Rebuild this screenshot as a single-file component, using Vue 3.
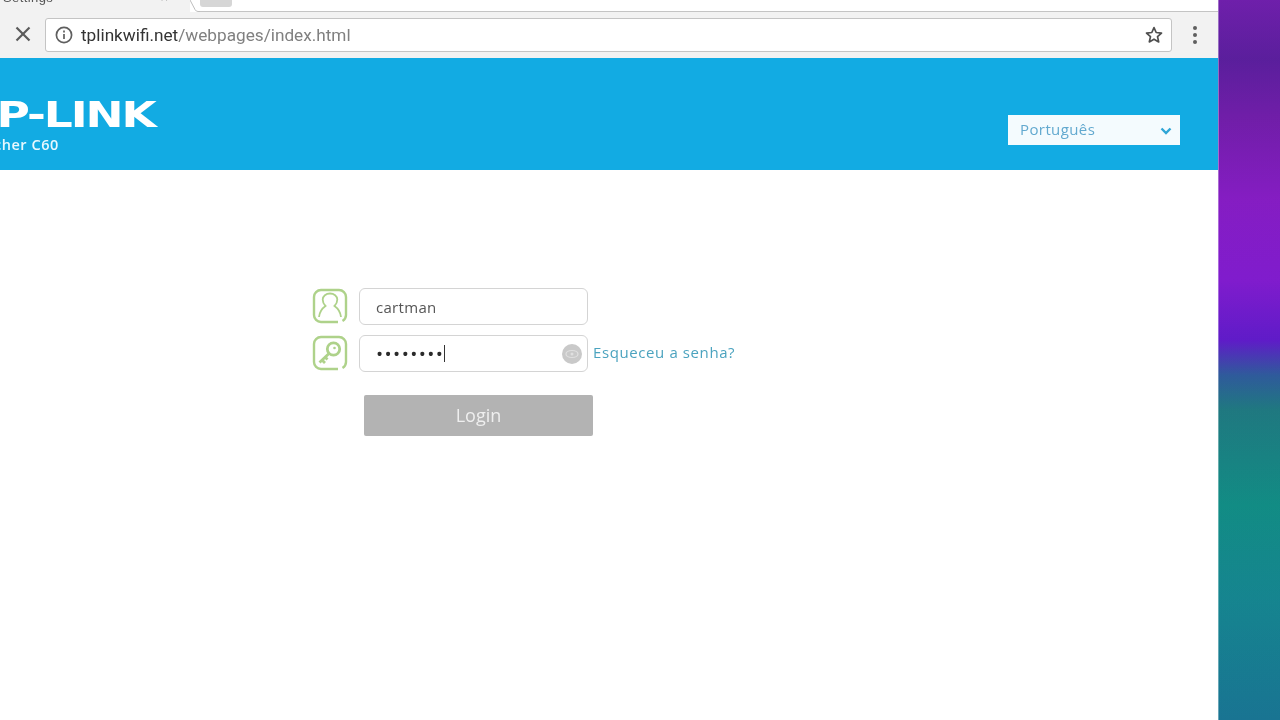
<script setup>
const username = 'cartman'
const dots = '••••••••'
</script>

<template>
  <div class="screen">
    <div class="browser">
      <div class="tabstrip">
        <div class="tab-active"><span class="tab-title">Settings</span><span class="tab-close">×</span></div>
        <svg class="tab-edge" width="10" height="12" viewBox="0 0 10 12" fill="none" stroke="#bdbdbd" stroke-width="1">
          <path d="M0 0l5 9.500q1 2 3 2h2"/>
        </svg>
        <div class="tab-rest"><div class="tab-new"></div></div>
      </div>
      <div class="toolbar">
        <svg class="tb-close" width="20" height="20" viewBox="0 0 20 20" fill="none" stroke="#5a5a5a" stroke-width="2.2">
          <line x1="3.500" y1="2.500" x2="16.500" y2="15.500"/><line x1="16.500" y1="2.500" x2="3.500" y2="15.500"/>
        </svg>
        <div class="omnibox">
          <svg width="18" height="18" viewBox="0 0 18 18" fill="none" stroke="#5f5f5f" stroke-width="1.700">
            <circle cx="9" cy="9" r="7.600"/><line x1="9" y1="8" x2="9" y2="13"/><line x1="9" y1="4.600" x2="9" y2="6.400"/>
          </svg>
          <span class="url"><span class="host">tplinkwifi.net</span>/webpages/index.html</span>
          <svg class="star" width="20" height="20" viewBox="0 0 20 20" fill="none" stroke="#4f4f4f" stroke-width="1.700" stroke-linejoin="round">
            <path d="M10 2.600l2.200 4.900 5.300.6-4 3.500 1.200 5.300L10 14.200l-4.700 2.700 1.200-5.300-4-3.500 5.300-.6z"/>
          </svg>
        </div>
        <div class="menu-dots"><i></i><i></i><i></i></div>
      </div>

      <header class="banner">
        <div class="brand">
          <div class="logo">TP-LINK</div>
          <div class="model">Archer C60</div>
        </div>
        <div class="lang">
          <span>Português</span>
          <svg width="12" height="8" viewBox="0 0 12 8" fill="none" stroke="#2fa6d6" stroke-width="2.400">
            <polyline points="1.500,1.500 6,6 10.500,1.500"/>
          </svg>
        </div>
      </header>

      <main class="content">
        <div class="row">
          <svg class="field-icon" width="36" height="36" viewBox="0 0 36 36" fill="none" stroke="#aed28a" stroke-width="2.400">
            <path d="M26 34H9a7 7 0 0 1-7-7V9a7 7 0 0 1 7-7h18a7 7 0 0 1 7 7v18a7 7 0 0 1-3.500 6"/>
            <path d="M7 29c.5-5 3-8.500 6.500-11-2-2-2.800-4-2.800-6.500C10.700 8 14 5.500 18 5.500s7.300 2.500 7.300 6c0 2.500-.8 4.500-2.800 6.500 3.500 2.500 6 6 6.500 11" stroke-width="1.800"/>
          </svg>
          <div class="field"><span class="value">{{ username }}</span></div>
        </div>
        <div class="row">
          <svg class="field-icon" width="36" height="36" viewBox="0 0 36 36" fill="none" stroke="#aed28a" stroke-width="2.400">
            <path d="M26 34H9a7 7 0 0 1-7-7V9a7 7 0 0 1 7-7h18a7 7 0 0 1 7 7v18a7 7 0 0 1-3.500 6"/>
            <circle cx="21.500" cy="14" r="6.200" stroke-width="2.800"/>
            <circle cx="22.500" cy="13" r="1.300" fill="#aed28a" stroke="none"/>
            <path d="M17 18.500l-9.500 9M10 25l3 3M13 22l2.500 2.500" stroke-width="2.800"/>
          </svg>
          <div class="field">
            <span class="dots">{{ dots }}</span><span class="caret"></span>
            <svg class="eye" width="20" height="20" viewBox="0 0 20 20">
              <circle cx="10" cy="10" r="10" fill="#c9c9c9"/>
              <ellipse cx="10" cy="10" rx="6" ry="3.500" fill="none" stroke="#e0e0e0" stroke-width="1.200"/>
              <circle cx="10" cy="10" r="1.500" fill="#e0e0e0"/>
            </svg>
          </div>
          <a class="forgot">Esqueceu a senha?</a>
        </div>
        <button type="button" class="login">Login</button>
      </main>
    </div>
    <div class="wallpaper"></div>
  </div>
</template>

<style scoped>
.screen {
  display: flex;
  width: 1280px;
  height: 720px;
  overflow: hidden;
  font-family: "Open Sans", "Liberation Sans", sans-serif;
  filter: blur(0.6px);
}

.browser {
  width: 1218px;
  display: flex;
  flex-direction: column;
  background: #fff;
}

.tabstrip {
  height: 12px;
  display: flex;
  overflow: hidden;
  flex-shrink: 0;
}

.tab-active {
  width: 190px;
  background: #f2f2f2;
  display: flex;
  justify-content: space-between;
  height: 12px;
  font-size: 13px;
  color: #555;
  font-family: "Liberation Sans", sans-serif;
  overflow: hidden;
}
.tab-title { margin: -11px 0 0 3px; line-height: 18px; letter-spacing: .4px; }
.tab-close { margin: -11px 22px 0 0; line-height: 18px; }

.tab-edge { flex-shrink: 0; background: #fff; }

.tab-rest {
  flex: 1;
  box-sizing: border-box;
  height: 12px;
  background: #fff;
  border-bottom: 1px solid #c4c4c4;
}

.tab-new {
  width: 32px;
  height: 7px;
  background: #d6d6d6;
  border-radius: 0 0 3px 3px;
}

.toolbar {
  height: 46px;
  background: #f2f2f2;
  display: flex;
  align-items: center;
  padding: 0 13px;
  flex-shrink: 0;
}

.tb-close { flex-shrink: 0; }

.omnibox {
  width: 1127px;
  height: 34px;
  margin-left: 12px;
  box-sizing: border-box;
  display: flex;
  align-items: center;
  gap: 8px;
  padding: 0 7px 0 9px;
  background: #fff;
  border: 1px solid #c4c4c4;
  border-radius: 3px;
}

.url {
  flex: 1;
  font-size: 17.200px;
  color: #808080;
  font-family: "Roboto", "Liberation Sans", sans-serif;
}
.host { color: #333; }

.menu-dots {
  margin-left: 21px;
  display: flex;
  flex-direction: column;
  gap: 3px;
}
.menu-dots i {
  width: 4px;
  height: 4px;
  border-radius: 50%;
  background: #5f5f5f;
}

.banner {
  height: 112px;
  background: #12abe3;
  display: flex;
  justify-content: space-between;
  flex-shrink: 0;
  overflow: hidden;
}

.brand {
  padding-top: 38px;
  color: #fff;
  white-space: nowrap;
}

.logo {
  margin-left: -25px;
  font-family: "DejaVu Sans", sans-serif;
  font-weight: 700;
  font-size: 35px;
  line-height: 39px;
  letter-spacing: -1.600px;
  transform: scaleX(1.3);
  transform-origin: 25px 0;
}

.model {
  margin-left: -23px;
  font-size: 14.500px;
  font-weight: 600;
  letter-spacing: .55px;
  line-height: 20px;
  color: #e8f8fe;
}

.lang {
  width: 172px;
  height: 30px;
  box-sizing: border-box;
  margin: 57px 38px 0 0;
  padding: 0 8px 2px 12px;
  background: #f4fbfe;
  display: flex;
  align-items: center;
  justify-content: space-between;
  font-size: 15px;
  letter-spacing: .4px;
  color: #62a9cf;
}
.lang svg { margin-top: 3px; }

.content {
  flex: 1;
  padding: 118px 0 0 312px;
}

.row {
  display: flex;
  align-items: center;
  height: 37px;
  margin-bottom: 10px;
}

.field-icon { flex-shrink: 0; margin-top: -2px; }

.field {
  width: 229px;
  height: 37px;
  box-sizing: border-box;
  margin-left: 11px;
  padding: 0 5px 0 16px;
  display: flex;
  align-items: center;
  background: #fff;
  border: 1px solid #d4d4d4;
  border-radius: 6px;
  font-size: 15px;
  letter-spacing: .3px;
  color: #555;
}

.dots {
  color: #2a2a2a;
  font-size: 19px;
  letter-spacing: 1.400px;
}

.caret {
  width: 1px;
  height: 17px;
  background: #333;
}

.eye { margin-left: auto; }

.forgot {
  margin: -4px 0 0 5px;
  font-size: 15px;
  letter-spacing: .6px;
  color: #4ba3bf;
  white-space: nowrap;
}

.login {
  display: block;
  width: 229px;
  height: 41px;
  margin: 23px 0 0 52px;
  padding: 0 0 2px;
  border: none;
  border-radius: 2px;
  background: #b3b3b3;
  color: #efefef;
  font-family: inherit;
  font-size: 18px;
  font-weight: 500;
}

.wallpaper {
  flex: 1;
  background:
    linear-gradient(170deg, rgba(255, 255, 255, .03), rgba(0, 0, 0, .05)),
    linear-gradient(180deg, #6a18a8 0, #56189a 60px, #6e18a8 120px, #8418c4 200px, #8018d0 280px, #5f18cc 340px, #2d5a9e 375px, #1d7a82 410px, #109088 505px, #158a95 597px, #1a7a9a 720px);
  box-shadow: inset 1px 0 rgba(255, 255, 255, .35);
}
</style>
